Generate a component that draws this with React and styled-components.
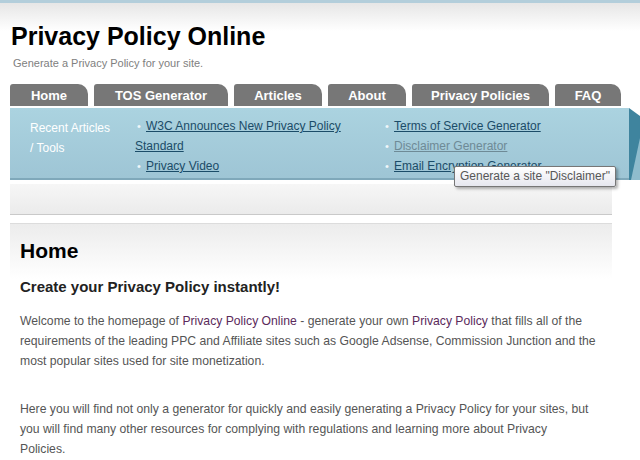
import React from 'react';
import styled, { createGlobalStyle } from 'styled-components';

const GlobalStyle = createGlobalStyle`
  html, body {
    margin: 0;
    padding: 0;
    background: #fff;
  }
  body {
    font-family: "Liberation Sans", Arial, sans-serif;
    width: 640px;
    height: 460px;
    overflow: hidden;
  }
`;

const Page = styled.div`
  width: 640px;
  border-top: 3px solid #b3cedb;
  background: linear-gradient(#e6e6e6, #fff 28px);
`;

const Header = styled.header`
  padding: 18px 0 0 11px;
`;

const Title = styled.h1`
  margin: 0;
  font-size: 25px;
  line-height: 30px;
  font-weight: bold;
  color: #000;
`;

const Tagline = styled.div`
  margin: 5px 0 0 2px;
  font-size: 11px;
  line-height: 14px;
  color: #808080;
`;

const Tabs = styled.nav`
  display: flex;
  gap: 6px;
  margin: 14px 0 0 10px;
`;

const Tab = styled.a`
  display: flex;
  align-items: center;
  justify-content: center;
  width: ${(p) => p.$w}px;
  height: 22px;
  background: #777;
  border-radius: 3px 10px 0 0;
  color: #fff;
  font-weight: bold;
  font-size: 13px;
  text-decoration: none;
`;

const PanelRow = styled.div`
  display: flex;
  margin: 2px 0 0 10px;
`;

const Panel = styled.div`
  position: relative;
  display: flex;
  width: 619px;
  height: 70px;
  background: linear-gradient(#abd3e0, #9ec5d5);
  border-bottom: 2px solid #7fa8ba;
`;

const Fold = styled.svg`
  display: block;
  flex: none;
`;

const PanelLabel = styled.div`
  width: 125px;
  box-sizing: border-box;
  padding: 10px 0 0 20px;
  color: #fff;
  font-size: 12px;
  line-height: 20px;
`;

const LinkList = styled.ul`
  list-style: none;
  margin: 0;
  padding: 8px 0 0 0;
  width: ${(p) => p.$w}px;
  font-size: 12px;
  line-height: 20px;
`;

const LinkItem = styled.li`
  color: #eef6f9;
  &::before {
    content: "•";
    display: inline-block;
    width: 11px;
    padding-left: 2px;
    box-sizing: border-box;
    font-size: 11px;
  }
`;

const PanelLink = styled.a`
  color: ${(p) => (p.$muted ? '#6e8a96' : '#1b4c68')};
  text-decoration: underline;
`;

const Tooltip = styled.div`
  position: absolute;
  left: 444px;
  top: 58px;
  padding: 2px 5px 3px;
  background: linear-gradient(#fff, #e6e7ef);
  border: 1px solid #767676;
  border-radius: 2px;
  box-shadow: 2px 2px 3px rgba(0, 0, 0, 0.3);
  color: #575757;
  font-size: 12px;
  line-height: 14px;
  white-space: nowrap;
  z-index: 2;
`;

const Bar = styled.div`
  margin: 4px 0 0 10px;
  width: 602px;
  height: 30px;
  background: linear-gradient(#f6f6f6, #ebebeb);
  border-bottom: 1px solid #c9c9c9;
`;

const Content = styled.main`
  margin: 8px 0 0 10px;
  width: 602px;
  border-top: 1px solid #dcdcdc;
  background: linear-gradient(#ececec, #fff 55px);
  padding: 13px 0 0 10px;
  box-sizing: border-box;
`;

const PageTitle = styled.h2`
  margin: 0;
  font-size: 21px;
  line-height: 28px;
  font-weight: bold;
  color: #000;
`;

const Lead = styled.h3`
  margin: 13px 0 0;
  font-size: 15px;
  line-height: 18px;
  font-weight: bold;
  color: #222;
`;

const Para = styled.p`
  margin: 15px 0 0;
  font-size: 12.2px;
  line-height: 20px;
  color: #555;
  white-space: nowrap;
  & + & {
    margin-top: 28px;
  }
`;

const TextLink = styled.a`
  color: #5b2a5b;
  text-decoration: none;
`;

const tabs = [
  ['Home', 78],
  ['TOS Generator', 134],
  ['Articles', 88],
  ['About', 78],
  ['Privacy Policies', 137],
  ['FAQ', 66],
];

export default function App() {
  return (
    <Page>
      <GlobalStyle />
      <Header>
        <Title>Privacy Policy Online</Title>
        <Tagline>Generate a Privacy Policy for your site.</Tagline>
      </Header>
      <Tabs>
        {tabs.map(([label, w]) => (
          <Tab key={label} $w={w}>{label}</Tab>
        ))}
      </Tabs>
      <PanelRow>
        <Panel>
          <PanelLabel>
            Recent Articles
            <br />/ Tools
          </PanelLabel>
          <LinkList $w={248}>
            <LinkItem>
              <PanelLink>W3C Announces New Privacy Policy Standard</PanelLink>
            </LinkItem>
            <LinkItem>
              <PanelLink>Privacy Video</PanelLink>
            </LinkItem>
          </LinkList>
          <LinkList $w={230}>
            <LinkItem>
              <PanelLink>Terms of Service Generator</PanelLink>
            </LinkItem>
            <LinkItem>
              <PanelLink $muted>Disclaimer Generator</PanelLink>
            </LinkItem>
            <LinkItem>
              <PanelLink>Email Encryption Generator</PanelLink>
            </LinkItem>
          </LinkList>
          <Tooltip>Generate a site "Disclaimer"</Tooltip>
        </Panel>
        <Fold width="11" height="72" viewBox="0 0 11 72">
          <polygon points="0,0 11,8 11,72 0,72" fill="#3f849e" />
          <polygon points="2,72 11,30 11,72" fill="#8fbccd" />
        </Fold>
      </PanelRow>
      <Bar />
      <Content>
        <PageTitle>Home</PageTitle>
        <Lead>Create your Privacy Policy instantly!</Lead>
        <Para>
          Welcome to the homepage of <TextLink>Privacy Policy Online</TextLink> - generate your own{' '}
          <TextLink>Privacy Policy</TextLink> that fills all of the
          <br />
          requirements of the leading PPC and Affiliate sites such as Google Adsense, Commission Junction and the
          <br />
          most popular sites used for site monetization.
        </Para>
        <Para>
          Here you will find not only a generator for quickly and easily generating a Privacy Policy for your sites, but
          <br />
          you will find many other resources for complying with regulations and learning more about Privacy
          <br />
          Policies.
        </Para>
      </Content>
    </Page>
  );
}
